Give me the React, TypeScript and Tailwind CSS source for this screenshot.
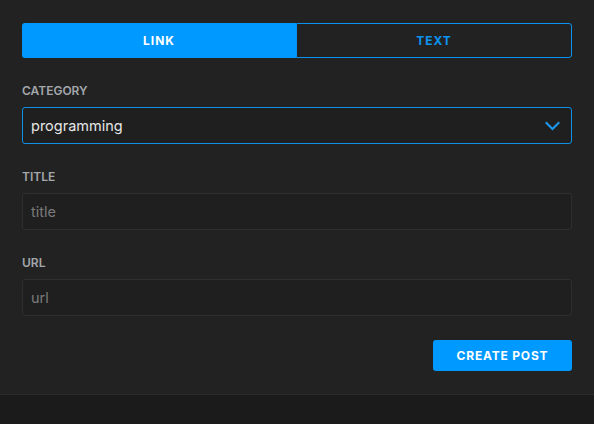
import React from "react";

export default function App() {
  const font = { fontFamily: "Inter, 'Noto Sans', sans-serif" };
  return (
    <div className="w-full h-[424px] bg-[#1b1b1b]" style={font}>
      <div className="bg-[#222222] border-b border-[#2c2c2c] px-[22px] pt-[23px] pb-[23px] flex flex-col">
        <div className="flex h-[35px]">
          <button className="flex-1 bg-[#0099ff] rounded-l-[3px] text-white text-[12px] font-bold tracking-[1px] flex items-center justify-center">
            LINK
          </button>
          <button className="flex-1 border border-[#0c93f0] rounded-r-[3px] text-[#0c93f0] text-[12px] font-bold tracking-[1px] flex items-center justify-center">
            TEXT
          </button>
        </div>

        <div className="mt-[25px] text-[12px] leading-[16px] font-semibold text-[#a3a7ab]">CATEGORY</div>
        <div className="mt-[8px] h-[37px] rounded-[3px] border border-[#1290e6] bg-[#1f1f1f] flex items-center justify-between pl-[8px] pr-[11px]">
          <span className="text-[14.5px] text-[#e6e6e6]">programming</span>
          <svg width="15" height="10" viewBox="0 0 15 10" fill="none">
            <path d="M1.5 2 L7.5 8 L13.5 2" stroke="#1a95ea" strokeWidth="2.2" strokeLinecap="square" />
          </svg>
        </div>

        <div className="mt-[25px] text-[12px] leading-[16px] font-semibold text-[#a3a7ab]">TITLE</div>
        <div className="mt-[8px] h-[37px] rounded-[3px] border border-[#2f2f2f] bg-[#1f1f1f] flex items-center pl-[8px]">
          <span className="text-[14.5px] text-[#7a7a7a]">title</span>
        </div>

        <div className="mt-[25px] text-[12px] leading-[16px] font-semibold text-[#a3a7ab]">URL</div>
        <div className="mt-[8px] h-[37px] rounded-[3px] border border-[#2f2f2f] bg-[#1f1f1f] flex items-center pl-[8px]">
          <span className="text-[14.5px] text-[#7a7a7a]">url</span>
        </div>

        <div className="mt-[24px] flex justify-end">
          <button className="h-[31px] w-[139px] rounded-[3px] bg-[#0099ff] text-white text-[12px] font-bold tracking-[0.8px] flex items-center justify-center">
            CREATE POST
          </button>
        </div>
      </div>
    </div>
  );
}
